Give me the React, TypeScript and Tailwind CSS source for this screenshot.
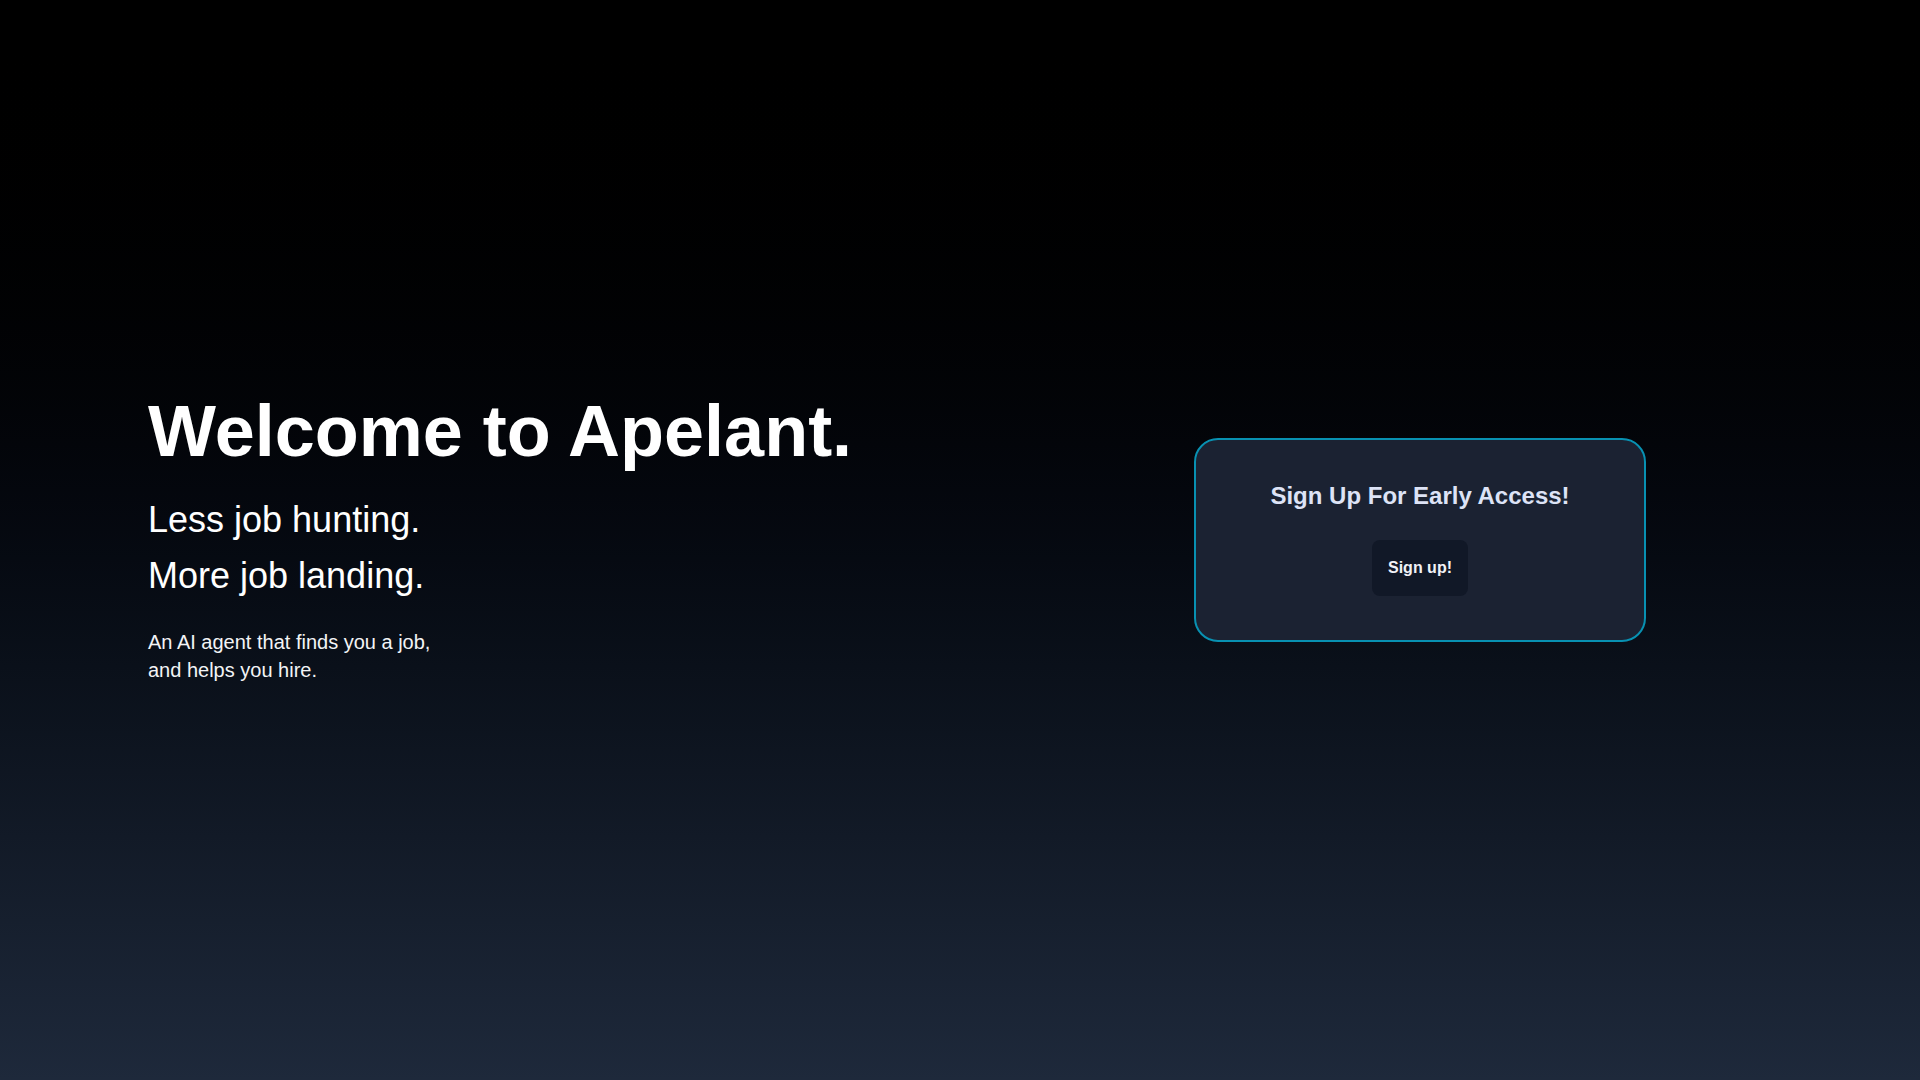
import React from "react";

export default function App() {
  return (
    <div
      className="w-screen bg-[#1e293b] text-white"
      style={{ fontFamily: '"Liberation Sans", Arial, Helvetica, sans-serif' }}
    >
      <section className="flex h-screen w-screen items-center justify-between bg-gradient-to-b from-black to-[#1e293b] pl-[148px] pr-[274px]">
        <div className="flex flex-col pb-[2px]">
          <h1 className="whitespace-nowrap text-[72px] font-bold leading-[72px] text-white">
            Welcome to Apelant.
          </h1>
          <p className="mt-[33px] text-4xl leading-10 text-white">Less job hunting.</p>
          <p className="mt-4 text-4xl leading-10 text-white">More job landing.</p>
          <p className="mt-8 text-xl leading-7 text-[#f3f4f6]">
            An AI agent that finds you a job,
            <br />
            and helps you hire.
          </p>
        </div>
        <div className="flex w-[452px] flex-col items-center rounded-3xl border-2 border-[#0891b2] bg-[#1b2232] pb-11 pt-10">
          <h2 className="text-2xl font-bold leading-8 text-[#dde3f6]">Sign Up For Early Access!</h2>
          <button className="mt-7 rounded-lg bg-[#111827] px-4 py-4 text-base font-bold leading-6 text-[#f1f2f7]">
            Sign up!
          </button>
        </div>
      </section>
      <section className="h-screen w-screen bg-[#1e293b]" />
      <section className="h-screen w-screen bg-[#1e293b]" />
      <section className="h-screen w-screen bg-[#1e293b]" />
    </div>
  );
}
